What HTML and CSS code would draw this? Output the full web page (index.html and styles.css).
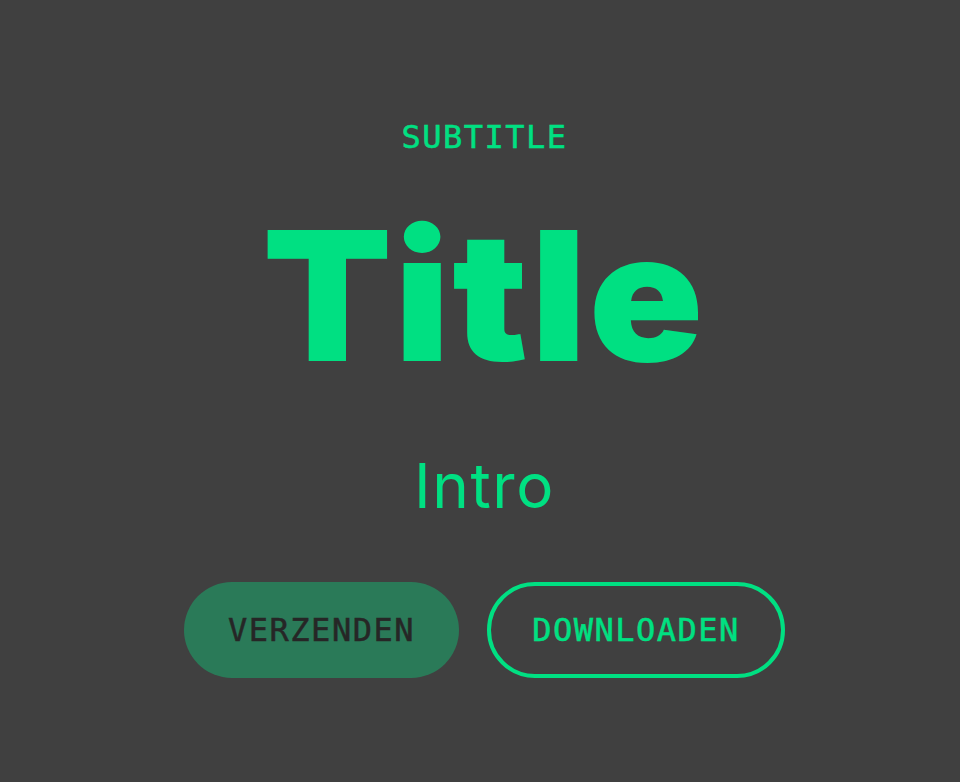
FILE: index.html
```html
<!DOCTYPE html>
<html lang="nl">
<head>
<meta charset="utf-8">
<title>Title</title>
<link rel="stylesheet" href="styles.css">
</head>
<body>
<main class="hero">
  <p class="subtitle">SUBTITLE</p>
  <h1 class="title">Title</h1>
  <p class="intro">Intro</p>
  <div class="actions">
    <button class="btn btn-primary" type="button">VERZENDEN</button>
    <button class="btn btn-outline" type="button">DOWNLOADEN</button>
  </div>
</main>
</body>
</html>
```

FILE: styles.css
```css
html, body {
  margin: 0;
  padding: 0;
  background: #404040;
}

.hero {
  box-sizing: border-box;
  height: 782px;
  padding-top: 121px;
  padding-left: 9px;
  display: flex;
  flex-direction: column;
  align-items: center;
  color: #00e082;
}

.subtitle {
  margin: 0;
  font-family: "DejaVu Sans Mono", "Liberation Mono", monospace;
  font-size: 32px;
  line-height: 32px;
  letter-spacing: 1.5px;
  -webkit-text-stroke: 0.5px currentColor;
}

.title {
  margin: 53px 0 0;
  font-family: Inter, "Noto Sans", sans-serif;
  font-weight: 900;
  font-size: 180px;
  line-height: 180px;
  letter-spacing: 2px;
  transform: scaleX(1.05);
}

.intro {
  margin: 69px 0 0;
  font-family: Inter, "Noto Sans", sans-serif;
  font-weight: 400;
  font-size: 62px;
  line-height: 62px;
  letter-spacing: 1.6px;
}

.actions {
  margin-top: 65px;
  display: flex;
  gap: 28px;
}

.btn {
  box-sizing: border-box;
  height: 96px;
  border-radius: 48px;
  font-family: "DejaVu Sans Mono", "Liberation Mono", monospace;
  font-size: 32px;
  letter-spacing: 1.5px;
  -webkit-text-stroke: 0.5px currentColor;
  cursor: pointer;
}

.btn-primary {
  width: 275px;
  background: #2a7a58;
  border: none;
  color: #262626;
}

.btn-outline {
  width: 298px;
  background: transparent;
  border: 4px solid #00e082;
  color: #00e082;
}
```
